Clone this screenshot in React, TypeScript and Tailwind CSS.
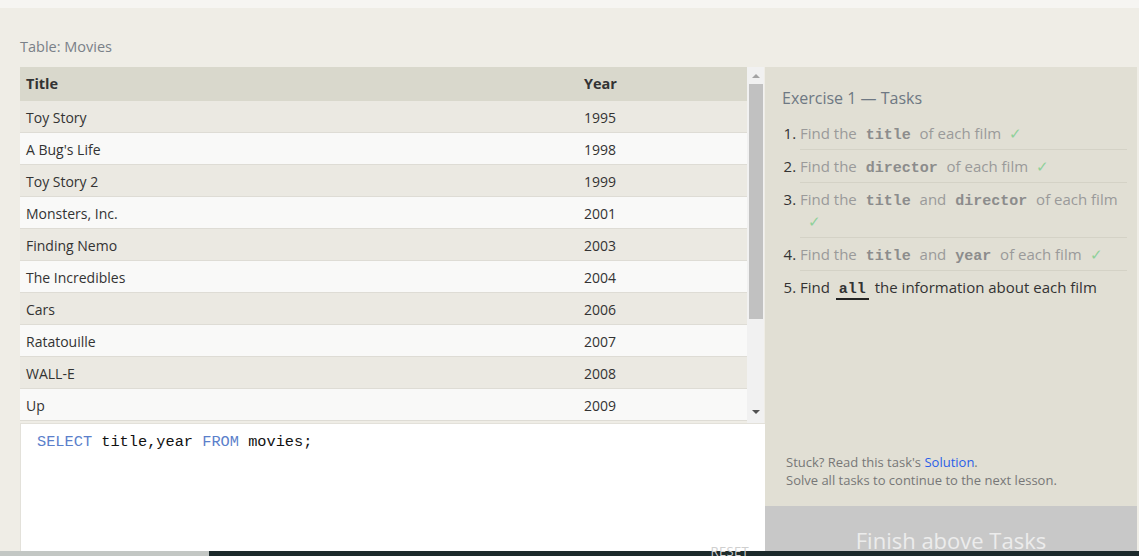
import React from "react";

const movies: [string, number][] = [
  ["Toy Story", 1995],
  ["A Bug's Life", 1998],
  ["Toy Story 2", 1999],
  ["Monsters, Inc.", 2001],
  ["Finding Nemo", 2003],
  ["The Incredibles", 2004],
  ["Cars", 2006],
  ["Ratatouille", 2007],
  ["WALL-E", 2008],
  ["Up", 2009],
];

const Code = ({ children, active }: { children: React.ReactNode; active?: boolean }) => (
  <code
    className={
      "font-['Liberation_Mono',monospace] font-bold text-[15px] leading-none " +
      (active ? "text-[#333] border-b-2 border-[#222] px-[3px] mx-[2px]" : "text-[#8c8c8c] px-[5px]")
    }
  >
    {children}
  </code>
);

const Check = () => <span className="ml-[8px] text-[#8fd19a]">✓</span>;

export default function App() {
  return (
    <div className="w-[1139px] h-[556px] bg-[#efede6] overflow-hidden flex flex-col font-['Open_Sans',sans-serif]">
      <div className="h-[8px] bg-[#f6f5f2] shrink-0" />
      <div className="pl-[20px] pt-[29px] h-[59px] text-[14.5px] leading-[20px] text-[#7a8088] shrink-0">
        Table: Movies
      </div>
      <div className="flex pl-[20px] h-[484px] shrink-0">
        {/* left column */}
        <div className="w-[745px] flex flex-col">
          <div className="flex h-[356px]">
            <div className="w-[727px] flex flex-col">
              <div className="h-[34px] bg-[#d9d8cc] flex items-center text-[14.5px] font-bold text-[#333] shrink-0">
                <div className="w-[564px] pl-[6px]">Title</div>
                <div>Year</div>
              </div>
              {movies.map(([t, y], i) => (
                <div
                  key={t}
                  className={
                    "h-[32px] flex items-center pt-[1px] text-[14px] text-[#333] border-b border-[#dedcd5] shrink-0 " +
                    (i % 2 === 0 ? "bg-[#ebe9e2]" : "bg-[#f9f9f8]")
                  }
                >
                  <div className="w-[564px] pl-[6px]">{t}</div>
                  <div>{y}</div>
                </div>
              ))}
            </div>
            <div className="w-[17px] bg-[#f1f1f1] flex flex-col items-center">
              <div className="h-[17px] flex items-center justify-center">
                <div className="w-0 h-0 border-l-[4px] border-r-[4px] border-b-[4px] border-l-transparent border-r-transparent border-b-[#a3a3a3]" />
              </div>
              <div className="w-[14px] h-[235px] bg-[#c1c1c1]" />
              <div className="flex-1" />
              <div className="h-[17px] flex items-center justify-center mb-[3px]">
                <div className="w-0 h-0 border-l-[4px] border-r-[4px] border-t-[4px] border-l-transparent border-r-transparent border-t-[#505050]" />
              </div>
            </div>
          </div>
          <div className="flex-1 bg-white border-l border-t border-[#e3e1da] relative">
            <div className="pl-[16px] pt-[8px] font-['Liberation_Mono',monospace] text-[15.3px] leading-[20px] text-[#111]">
              <span className="text-[#5b7fcb]">SELECT</span> title,year <span className="text-[#5b7fcb]">FROM</span> movies;
            </div>
            <div className="absolute right-[16px] bottom-[-7px] text-[13px] leading-[13px] text-[#cfcfcf] tracking-wide">RESET</div>
          </div>
        </div>
        {/* right panel */}
        <div className="w-[372px] flex flex-col">
          <div className="flex-1 bg-[#e1dfd4] flex flex-col">
            <div className="pl-[17px] pt-[20px] text-[16px] leading-[22px] text-[#6e7883]">Exercise 1 — Tasks</div>
            <ol className="list-decimal pl-[35px] pr-[10px] mt-[8px] text-[15px] text-[#333]">
              <li className="py-[5px] leading-[22px] border-b border-[#d4d2c6]">
                <span className="text-[#9a9a9a]">
                  Find the <Code>title</Code> of each film
                </span>
                <Check />
              </li>
              <li className="py-[5px] leading-[22px] border-b border-[#d4d2c6]">
                <span className="text-[#9a9a9a]">
                  Find the <Code>director</Code> of each film
                </span>
                <Check />
              </li>
              <li className="py-[5px] leading-[22px] border-b border-[#d4d2c6]">
                <span className="text-[#9a9a9a]">
                  Find the <Code>title</Code> and <Code>director</Code> of each film
                </span>
                <br />
                <Check />
              </li>
              <li className="py-[5px] leading-[22px] border-b border-[#d4d2c6]">
                <span className="text-[#9a9a9a]">
                  Find the <Code>title</Code> and <Code>year</Code> of each film
                </span>
                <Check />
              </li>
              <li className="py-[5px] leading-[22px]">
                Find <Code active>all</Code> the information about each film
              </li>
            </ol>
            <div className="flex-1" />
            <div className="pl-[21px] pb-[17px] text-[13px] leading-[18px] text-[#777]">
              <div>
                Stuck? Read this task's <span className="text-[#2a5ee8]">Solution</span>.
              </div>
              <div>Solve all tasks to continue to the next lesson.</div>
            </div>
          </div>
          <div className="h-[45px] bg-[#c8c8c8] overflow-hidden text-center">
            <div className="pt-[20px] text-[22px] leading-[28px] text-[#ececec]">Finish above Tasks</div>
          </div>
        </div>
      </div>
      <div className="h-[5px] flex shrink-0">
        <div className="w-[209px] bg-[#c3c7c4]" />
        <div className="flex-1 bg-[#1c2a2b]" />
      </div>
    </div>
  );
}
